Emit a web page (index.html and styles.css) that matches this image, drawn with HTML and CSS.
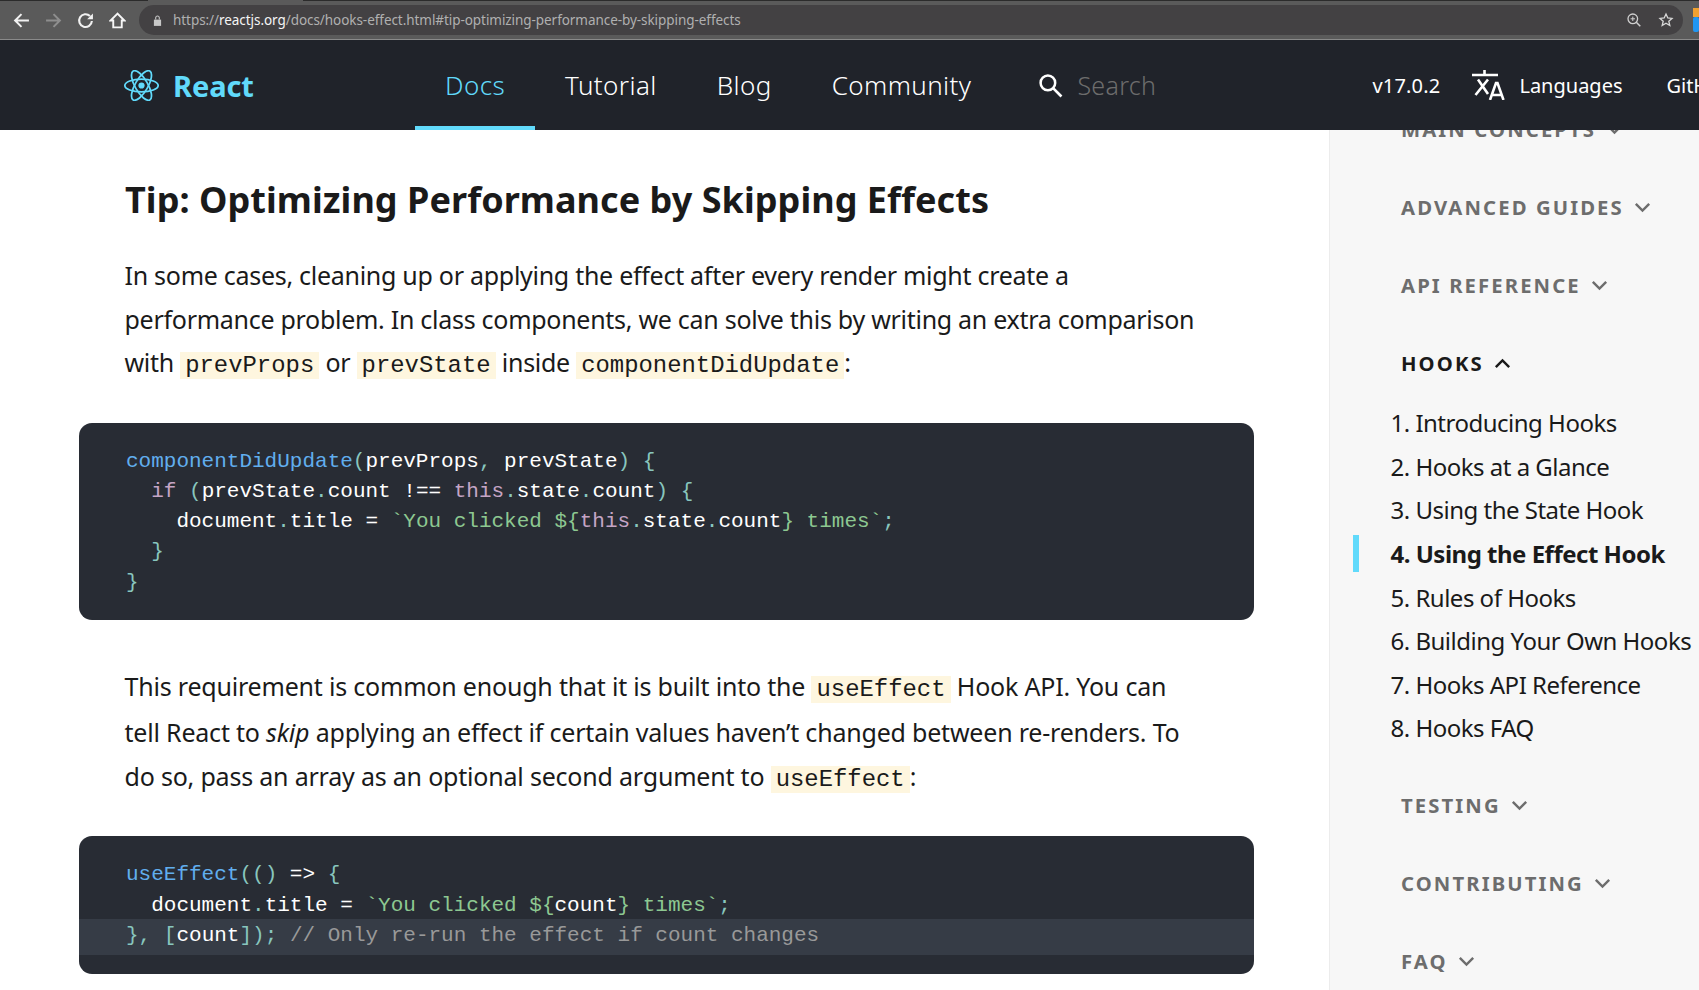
FILE: index.html
```html
<!DOCTYPE html>
<html lang="en">
<head>
<meta charset="utf-8">
<title>Using the Effect Hook – React</title>
<link rel="stylesheet" href="styles.css">
</head>
<body>
<div class="browser">
  <div class="tabstrip"><span class="tabstrip-dark"></span><span class="tabstrip-active"></span><span class="tabstrip-dark tabstrip-fill"></span></div>
  <div class="toolbar">
    <svg class="tb-icon" viewBox="0 0 16 16"><path d="M15 8H2M8 2 2 8l6 6" fill="none" stroke="#f1f1f1" stroke-width="1.900"/></svg>
    <svg class="tb-icon" viewBox="0 0 16 16"><path d="M1 8h13M8 2l6 6-6 6" fill="none" stroke="#8e8e8e" stroke-width="1.900"/></svg>
    <svg class="tb-icon" viewBox="0 0 16 16"><path d="M14 8.500A6 6 0 1 1 12.200 3.800" fill="none" stroke="#f1f1f1" stroke-width="2"/><path d="M9.500 6.800H15V1.300z" fill="#f1f1f1"/></svg>
    <svg class="tb-icon" viewBox="0 0 16 16"><path d="M8 1.500 1.500 8h2.500v6.500h8V8h2.500z" fill="none" stroke="#f6f6f6" stroke-width="1.800"/></svg>
    <div class="omnibox">
      <svg class="lock" viewBox="0 0 10 12"><path d="M1 5h8v7H1z" fill="#c8c8c8"/><path d="M3 5V3a2 2 0 0 1 4 0v2" fill="none" stroke="#c8c8c8" stroke-width="1.200"/></svg>
      <span class="url">https://<b class="url-host">reactjs.org</b>/docs/hooks-effect.html#tip-optimizing-performance-by-skipping-effects</span>
      <svg class="omni-icon" viewBox="0 0 16 16"><circle cx="6.800" cy="6.800" r="4.800" fill="none" stroke="#d0d0d0" stroke-width="1.300"/><path d="m10.300 10.300 4 4" stroke="#d0d0d0" stroke-width="1.500"/><path d="M4.600 6.800h4.400M6.800 4.600V9" stroke="#d0d0d0" stroke-width="1"/></svg>
      <svg class="omni-icon" viewBox="0 0 16 16"><path d="m8 2 1.800 4 4.200.4-3.200 2.800 1 4.300L8 11.200 4.200 13.500l1-4.300L2 6.400 6.200 6z" fill="none" stroke="#d8d8d8" stroke-width="1.300"/></svg>
    </div>
    <div class="ext"><span class="ext-a"></span><span class="ext-b"></span></div>
  </div>
</div>
<header class="nav">
  <div class="brand">
    <svg class="logo" viewBox="-11.500 -10.232 23 20.463"><circle r="2.050" fill="#61dafb"/><g fill="none" stroke="#61dafb" stroke-width="1.150"><ellipse rx="11" ry="4.200"/><ellipse rx="11" ry="4.200" transform="rotate(60)"/><ellipse rx="11" ry="4.200" transform="rotate(120)"/></g></svg>
    <span class="brand-name">React</span>
  </div>
  <nav class="links">
    <a class="link link-active">Docs</a>
    <a class="link">Tutorial</a>
    <a class="link">Blog</a>
    <a class="link">Community</a>
  </nav>
  <div class="search">
    <svg class="search-icon" viewBox="0 0 24 24"><circle cx="9.500" cy="9.500" r="7" fill="none" stroke="#fff" stroke-width="2.400"/><path d="m14.500 14.500 8 8" stroke="#fff" stroke-width="2.600"/></svg>
    <span class="search-text">Search</span>
  </div>
  <div class="nav-right">
    <span class="version">v17.0.2</span>
    <svg class="lang-icon" viewBox="0 0 33 30"><path d="M0 5h26M12.500 0v5" fill="none" stroke="#fff" stroke-width="2.600"/><path d="M6 9.500 16 24M16 9.500 3.500 25" fill="none" stroke="#fff" stroke-width="2.600"/><path d="m18 30 6-17h1.500l6 17M20 25h10" fill="none" stroke="#fff" stroke-width="2.600"/></svg>
    <span class="languages">Languages</span>
    <span class="github">GitHub</span>
  </div>
</header>
<div class="page">
  <main class="content">
    <h2 class="title">Tip: Optimizing Performance by Skipping Effects</h2>
    <p class="para para-first">In some cases, cleaning up or applying the effect after every render might create a performance problem. In class components, we can solve this by writing an extra comparison with <code class="ic">prevProps</code> or <code class="ic">prevState</code> inside <code class="ic">componentDidUpdate</code>:</p>
    <pre class="code"><span class="fn">componentDidUpdate</span><span class="pn">(</span>prevProps<span class="pn">,</span> prevState<span class="pn">)</span> <span class="pn">{</span>
  <span class="kw">if</span> <span class="pn">(</span>prevState<span class="pn">.</span>count <span class="op">!==</span> <span class="kw">this</span><span class="pn">.</span>state<span class="pn">.</span>count<span class="pn">)</span> <span class="pn">{</span>
    document<span class="pn">.</span>title <span class="op">=</span> <span class="str">`You clicked ${</span><span class="kw">this</span><span class="pn">.</span>state<span class="pn">.</span>count<span class="str">} times`</span><span class="pn">;</span>
  <span class="pn">}</span>
<span class="pn">}</span></pre>
    <p class="para para-second">This requirement is common enough that it is built into the <code class="ic">useEffect</code> Hook API. You can tell React to <em>skip</em> applying an effect if certain values haven’t changed between re-renders. To do so, pass an array as an optional second argument to <code class="ic">useEffect</code>:</p>
    <pre class="code code-short"><span class="fn">useEffect</span><span class="pn">(()</span> <span class="op">=&gt;</span> <span class="pn">{</span>
  document<span class="pn">.</span>title <span class="op">=</span> <span class="str">`You clicked ${</span>count<span class="str">} times`</span><span class="pn">;</span>
<span class="hl"><span class="pn">},</span> <span class="pn">[</span>count<span class="pn">]);</span> <span class="cm">// Only re-run the effect if count changes</span></span></pre>
  </main>
  <aside class="side">
    <div class="side-head side-head-clipped">Main Concepts<svg class="chev" viewBox="0 0 14 9"><path d="m1.500 1.500 5.500 5.500 5.500-5.500" fill="none" stroke="currentColor" stroke-width="2"/></svg></div>
    <div class="side-head">Advanced Guides<svg class="chev" viewBox="0 0 14 9"><path d="m1.500 1.500 5.500 5.500 5.500-5.500" fill="none" stroke="currentColor" stroke-width="2"/></svg></div>
    <div class="side-head">API Reference<svg class="chev" viewBox="0 0 14 9"><path d="m1.500 1.500 5.500 5.500 5.500-5.500" fill="none" stroke="currentColor" stroke-width="2"/></svg></div>
    <div class="side-head side-head-open">Hooks<svg class="chev" viewBox="0 0 14 9"><path d="m1.500 7.500 5.500-5.500 5.500 5.500" fill="none" stroke="currentColor" stroke-width="2"/></svg></div>
    <ol class="side-list">
      <li class="side-item">1. Introducing Hooks</li>
      <li class="side-item">2. Hooks at a Glance</li>
      <li class="side-item">3. Using the State Hook</li>
      <li class="side-item side-item-active">4. Using the Effect Hook</li>
      <li class="side-item">5. Rules of Hooks</li>
      <li class="side-item">6. Building Your Own Hooks</li>
      <li class="side-item">7. Hooks API Reference</li>
      <li class="side-item">8. Hooks FAQ</li>
    </ol>
    <div class="side-head side-head-after">Testing<svg class="chev" viewBox="0 0 14 9"><path d="m1.500 1.500 5.500 5.500 5.500-5.500" fill="none" stroke="currentColor" stroke-width="2"/></svg></div>
    <div class="side-head">Contributing<svg class="chev" viewBox="0 0 14 9"><path d="m1.500 1.500 5.500 5.500 5.500-5.500" fill="none" stroke="currentColor" stroke-width="2"/></svg></div>
    <div class="side-head">FAQ<svg class="chev" viewBox="0 0 14 9"><path d="m1.500 1.500 5.500 5.500 5.500-5.500" fill="none" stroke="currentColor" stroke-width="2"/></svg></div>
  </aside>
</div>
</body>
</html>
```
FILE: styles.css
```css
* { box-sizing: border-box; }
html, body { margin: 0; height: 990px; overflow: hidden; }
body { font-family: "Noto Sans", "Open Sans", sans-serif; background: #fff; color: #1a1a1a; display: flex; flex-direction: column; }

.browser { flex: none; height: 40px; background: #5a5a5a; border-bottom: 1px solid #8a8a8a; overflow: hidden; }
.tabstrip { display: flex; height: 1px; }
.tabstrip-dark { width: 148px; background: #2b2b2b; }
.tabstrip-active { width: 155px; background: #5a5a5a; }
.tabstrip-fill { flex: 1; }
.toolbar { display: flex; align-items: center; height: 38px; padding-left: 13px; }
.tb-icon { width: 17px; height: 17px; margin-right: 15px; flex: none; }
.omnibox { flex: none; width: 1544px; height: 30px; margin-left: -2px; background: #434143; border-radius: 15px; display: flex; align-items: center; padding: 0 9px 0 14px; }
.lock { width: 9px; height: 11px; flex: none; margin-right: 11px; }
.url { flex: 1; font-size: 13.500px; letter-spacing: -0.060px; color: #b0b0b0; white-space: nowrap; }
.url-host { color: #f5f5f5; font-weight: 400; }
.omni-icon { width: 16px; height: 16px; margin-left: 16px; flex: none; }
.ext { width: 6px; height: 24px; margin-left: 10px; display: flex; flex-direction: column; }
.ext-a { height: 9px; background: #f0a030; }
.ext-b { flex: 1; background: #2196f3; border-radius: 2px; }

.nav { flex: none; height: 90px; background: #20232a; display: flex; align-items: stretch; padding-left: 124px; color: #fff; overflow: hidden; }
.brand { display: flex; align-items: center; width: 291px; flex: none; }
.logo { width: 35px; height: 31px; flex: none; }
.brand-name { margin-left: 14px; font-size: 29px; font-weight: 700; color: #61dafb; letter-spacing: -0.100px; }
.links { display: flex; flex: none; }
.link { display: flex; align-items: center; padding: 0 30px; font-size: 26px; font-weight: 300; color: #fff; letter-spacing: 0.400px; border-bottom: 4px solid transparent; border-top: 4px solid transparent; }
.link-active { color: #61dafb; border-bottom-color: #61dafb; }
.search { display: flex; align-items: center; flex: none; margin-left: 37px; width: 334px; }
.search-icon { width: 25px; height: 25px; flex: none; }
.search-text { margin-left: 14px; font-size: 25px; font-weight: 300; color: #6d6d6d; letter-spacing: 0.300px; }
.nav-right { display: flex; align-items: center; flex: none; white-space: nowrap; font-size: 20px; }
.version { width: 100px; letter-spacing: 0.200px; }
.lang-icon { width: 33px; height: 30px; flex: none; }
.languages { margin-left: 14px; width: 102px; letter-spacing: 0; }
.github { margin-left: 45px; }

.page { flex: 1; min-height: 0; display: flex; overflow: hidden; }
.content { flex: none; width: 1329px; padding: 45px 0 0 79px; }
.title { margin: 0 0 0 46px; font-size: 36px; line-height: 50px; font-weight: 700; color: #1a1a1a; letter-spacing: 0.050px; white-space: nowrap; }
.para { margin: 29px 0 0 45.500px; font-size: 25px; line-height: 43.500px; color: #1a1a1a; }
.para-first { width: 1083px; letter-spacing: -0.280px; }
.para-second { width: 1070px; letter-spacing: -0.200px; }
.ic { font-family: "Liberation Mono", monospace; font-size: 23.900px; letter-spacing: 0; background: #fef6df; padding: 0 5px; }
.code { margin: 35px 0 0; width: 1175px; padding: 24px 47px 22px; background: #282c34; border-radius: 13px; font-family: "Liberation Mono", monospace; font-size: 21px; line-height: 30.300px; color: #fff; overflow: hidden; }
.code-short { padding-bottom: 19px; }
.code + .para { margin-top: 45px; }
.fn { color: #61aeee; }
.pn { color: #88c6be; }
.kw { color: #c5a5c5; }
.op { color: #fff; }
.str { color: #8dc891; }
.cm { color: #999; }
.hl { display: block; margin: -2px -47px 0; padding: 2px 47px 4px; background: #363c46; }

.side { flex: 1; min-width: 0; background: #f7f7f7; border-left: 1px solid #ececec; overflow: hidden; position: relative; }
.side-head { margin-left: 71px; height: 78px; display: flex; align-items: center; font-size: 20.300px; font-weight: 700; letter-spacing: 2.100px; text-transform: uppercase; color: #6d6d6d; white-space: nowrap; }
.side-head-clipped { margin-top: -40px; }
.side-head-open { color: #1a1a1a; margin-bottom: -1px; }
.side-head-after { margin-top: 16px; }
.chev { width: 17px; height: 11px; margin-left: 10px; flex: none; }
.side-list { list-style: none; margin: 0; padding: 0 0 0 60.500px; }
.side-item { height: 43.650px; line-height: 43.650px; font-size: 24px; letter-spacing: -0.500px; color: #1a1a1a; white-space: nowrap; position: relative; }
.side-item-active { font-weight: 700; }
.side-item-active::before { content: ""; position: absolute; left: -37.500px; top: 3px; width: 6px; height: 37px; background: #61dafb; }
```
